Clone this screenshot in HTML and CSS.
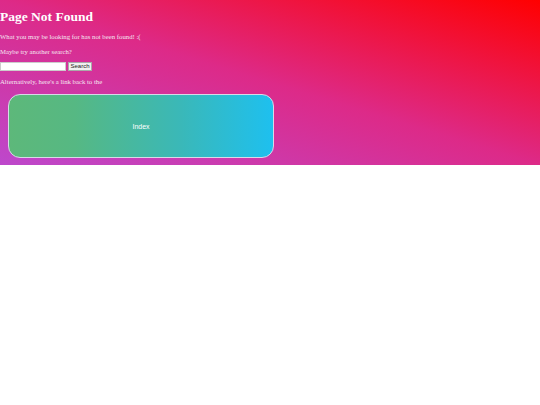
FILE: index.html
```html
<!DOCTYPE html>
<html>
<head>
<meta charset="utf-8">
<link rel="stylesheet" href="styles.css">
</head>
<body>
<div class="page">
  <h1 class="title">Page Not Found</h1>
  <p class="text">What you may be looking for has not been found! :(</p>
  <p class="text">Maybe try another search?</p>
  <form class="search">
    <input class="search-input" type="text">
    <button class="search-btn" type="button">Search</button>
  </form>
  <p class="text">Alternatively, here's a link back to the</p>
  <a class="index-btn" href="#">Index</a>
</div>
</body>
</html>
```
FILE: styles.css
```css
html, body {
  margin: 0;
  padding: 0;
  background: #fff;
}
.page {
  height: 165px;
  box-sizing: border-box;
  padding-top: 1px;
  background: linear-gradient(to top right, #bd48cc 0%, #dd2a88 50%, #ff0000 100%);
  font-family: "Liberation Serif", "Times New Roman", serif;
  color: #fff;
  font-size: 6.75px;
}
.title {
  font-size: 13.5px;
  font-weight: bold;
  margin: 8px 0 8px 0;
  line-height: 16px;
}
.text {
  margin: 7px 0;
  line-height: 8px;
  color: #f4e6f0;
}
.search {
  display: flex;
  align-items: center;
  gap: 2px;
  margin: -1px 0 0 0;
  height: 9px;
}
.search-input {
  width: 66px;
  height: 9px;
  box-sizing: border-box;
  border: 1px solid #ccc;
  background: #fff;
  padding: 0;
  margin: 0;
}
.search-btn {
  height: 9px;
  width: 24px;
  box-sizing: border-box;
  padding: 0;
  margin: 0;
  border: 1px solid #aaa;
  background: #f0f0f0;
  font-family: "Liberation Sans", Arial, sans-serif;
  font-size: 6px;
  line-height: 7px;
  color: #222;
}
.index-btn {
  display: flex;
  align-items: center;
  justify-content: center;
  width: 266px;
  height: 64px;
  box-sizing: border-box;
  margin: 8px 0 0 8px;
  border: 1px solid #d8d8e8;
  border-radius: 12px;
  background: linear-gradient(to right, #5db87a 0%, #56b883 25%, #3ab8b8 65%, #1ec0ef 100%);
  color: #fff;
  text-decoration: none;
  font-family: "Liberation Sans", Arial, sans-serif;
  font-size: 7px;
}
```
